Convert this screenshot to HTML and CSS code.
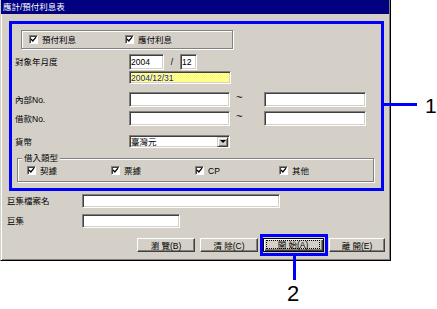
FILE: index.html
```html
<!DOCTYPE html>
<html lang="zh-Hant">
<head>
<meta charset="utf-8">
<title>應計/預付利息表</title>
<link rel="stylesheet" href="styles.css">
</head>
<body>
<div class="window">
  <div class="titlebar">應計/預付利息表</div>
  <div class="content">
    <div class="topgroup">
      <label class="chk chk-top"><span class="cb"><svg viewBox="0 0 7 7" width="7" height="7"><polyline points="1,3 2.8,5 6,1.2" fill="none" stroke="#000" stroke-width="1.3"/></svg></span>預付利息</label>
      <label class="chk chk-top"><span class="cb"><svg viewBox="0 0 7 7" width="7" height="7"><polyline points="1,3 2.8,5 6,1.2" fill="none" stroke="#000" stroke-width="1.3"/></svg></span>應付利息</label>
    </div>

    <div class="row r-date">
      <span class="lbl">對象年月度</span>
      <span class="field f-year">2004</span>
      <span class="slash">/</span>
      <span class="field f-month">12</span>
    </div>
    <div class="row r-yellow">
      <span class="field yellow">2004/12/31</span>
    </div>

    <div class="row r-range1">
      <span class="lbl">內部No.</span>
      <span class="field f-wide"></span>
      <span class="tilde">~</span>
      <span class="field f-wide2"></span>
    </div>
    <div class="row r-range2">
      <span class="lbl">借款No.</span>
      <span class="field f-wide"></span>
      <span class="tilde">~</span>
      <span class="field f-wide2"></span>
    </div>

    <div class="row r-cur">
      <span class="lbl">貨幣</span>
      <span class="field select"><span class="sel-text">臺灣元</span><span class="drop"><span class="tri"></span></span></span>
    </div>

    <div class="group2">
      <span class="legend">借入類型</span>
      <label class="chk chk-bottom"><span class="cb"><svg viewBox="0 0 7 7" width="7" height="7"><polyline points="1,3 2.8,5 6,1.2" fill="none" stroke="#000" stroke-width="1.3"/></svg></span>契據</label>
      <label class="chk chk-bottom"><span class="cb"><svg viewBox="0 0 7 7" width="7" height="7"><polyline points="1,3 2.8,5 6,1.2" fill="none" stroke="#000" stroke-width="1.3"/></svg></span>票據</label>
      <label class="chk chk-bottom"><span class="cb"><svg viewBox="0 0 7 7" width="7" height="7"><polyline points="1,3 2.8,5 6,1.2" fill="none" stroke="#000" stroke-width="1.3"/></svg></span>CP</label>
      <label class="chk chk-bottom"><span class="cb"><svg viewBox="0 0 7 7" width="7" height="7"><polyline points="1,3 2.8,5 6,1.2" fill="none" stroke="#000" stroke-width="1.3"/></svg></span>其他</label>
    </div>

    <div class="row2 r-macro1">
      <span class="lbl2">巨集檔案名</span>
      <span class="field f-macro"></span>
    </div>
    <div class="row2 r-macro2">
      <span class="lbl2">巨集</span>
      <span class="field f-macro2"></span>
    </div>

    <div class="buttons">
      <span class="btn">瀏 覽(B)</span>
      <span class="btn">清 除(C)</span>
      <span class="btn btn-default"><span class="focus">開 始(A)</span></span>
      <span class="btn btn-last">離 開(E)</span>
    </div>
  </div>
</div>

<div class="callout-box box1"></div>
<div class="callout-line line1"></div>
<div class="callout-num num1">1</div>

<div class="callout-box box2"></div>
<div class="callout-line line2"></div>
<div class="callout-num num2">2</div>
</body>
</html>
```

FILE: styles.css
```css
* { box-sizing: border-box; }

html, body {
  margin: 0;
  padding: 0;
}

body {
  width: 437px;
  height: 309px;
  background: #fff;
  position: relative;
  overflow: hidden;
  font-family: "Liberation Sans", "Noto Sans CJK TC", sans-serif;
  font-size: 8.5px;
  line-height: 10px;
  color: #000;
}

.window {
  width: 391px;
  height: 261px;
  background: #d4d0c8;
  border-left: 1px solid #d4d0c8;
  border-right: 1px solid #000;
  border-bottom: 1px solid #000;
  box-shadow: inset 1px 0 #fff, inset -1px -1px #808080;
}

.titlebar {
  height: 14px;
  margin-right: 1px;
  background: #000080;
  color: #fff;
  padding-left: 2px;
  line-height: 14px;
}

/* top checkbox group */
.topgroup {
  margin: 16px 0 0 20px;
  width: 212px;
  height: 19px;
  border: 1px solid #808080;
  box-shadow: inset 1px 1px #fff, 1px 1px #fff;
  display: flex;
  align-items: center;
  padding-left: 7px;
}

.chk {
  display: flex;
  align-items: center;
}

.chk-top { width: 96px; }
.chk-bottom { width: 84px; }

.cb {
  width: 9px;
  height: 9px;
  margin-right: 4px;
  background: #fff;
  border: 1px solid;
  border-color: #808080 #fff #fff #808080;
  box-shadow: inset 1px 1px #404040;
  display: flex;
}

.cb svg { display: block; }

/* form rows */
.row {
  display: flex;
  align-items: center;
  margin-left: 14px;
}

.lbl { width: 114px; }

.field {
  background: #fff;
  border: 1px solid;
  border-color: #808080 #fff #fff #808080;
  box-shadow: inset 1px 1px #404040, inset -1px -1px #d4d0c8;
  padding-left: 1px;
  display: flex;
  align-items: center;
}

.r-date { margin-top: 5px; height: 16px; }
.f-year { width: 35px; height: 16px; }
.slash { width: 16px; text-align: center; }
.f-month { width: 17px; height: 16px; }

.r-yellow { margin-top: 1px; margin-left: 128px; height: 13px; }
.yellow {
  width: 102px;
  height: 13px;
  background: repeating-conic-gradient(#ffff40 0 25%, #ffffd0 0 50%) 0 0 / 2px 2px;
  color: #1a1aa8;
}

.r-range1 { margin-top: 8px; height: 15px; }
.r-range2 { margin-top: 4px; height: 15px; }
.f-wide { width: 101px; height: 15px; }
.f-wide2 { width: 102px; height: 15px; }
.tilde {
  width: 34px;
  padding-left: 6px;
  font-size: 11px;
  align-self: flex-start;
  line-height: 11px;
}

.r-cur { margin-top: 9px; height: 13px; }
.select {
  width: 101px;
  height: 13px;
  justify-content: space-between;
  padding-right: 1px;
}
.drop {
  width: 11px;
  height: 10px;
  background: #d4d0c8;
  border: 1px solid;
  border-color: #d4d0c8 #404040 #404040 #d4d0c8;
  box-shadow: inset 1px 1px #fff, inset -1px -1px #808080;
  display: flex;
  align-items: center;
  justify-content: center;
}
.tri {
  width: 0;
  height: 0;
  border-left: 3px solid transparent;
  border-right: 3px solid transparent;
  border-top: 3px solid #000;
}

/* bottom group box */
.group2 {
  position: relative;
  margin: 10px 0 0 16px;
  width: 357px;
  height: 24px;
  border: 1px solid #808080;
  box-shadow: inset 1px 1px #fff, 1px 1px #fff;
  display: flex;
  align-items: center;
  padding-left: 9px;
  padding-top: 1px;
}
.legend {
  position: absolute;
  top: -6px;
  left: 4px;
  padding: 0 2px;
  background: #d4d0c8;
}

/* macro rows */
.row2 {
  display: flex;
  align-items: center;
  margin-left: 6px;
}
.lbl2 { width: 75px; }
.r-macro1 { margin-top: 12px; height: 14px; }
.r-macro2 { margin-top: 6px; height: 14px; }
.f-macro { width: 198px; height: 14px; }
.f-macro2 { width: 98px; height: 14px; }

/* buttons */
.buttons {
  display: flex;
  gap: 5px;
  margin: 10px 0 0 136px;
  height: 14px;
}
.btn {
  width: 58px;
  height: 14px;
  background: #d4d0c8;
  border: 1px solid;
  border-color: #fff #404040 #404040 #fff;
  box-shadow: inset -1px -1px #808080;
  display: flex;
  align-items: center;
  justify-content: center;
  padding-top: 1px;
}
.btn-default {
  width: 61px;
  border: 1px solid #000;
  box-shadow: inset 1px 1px #fff, inset -1px -1px #404040, inset -2px -2px #808080;
  padding: 1px 3px 2px 2px;
}
.focus {
  flex: 1;
  align-self: stretch;
  border: 1px dotted #000;
  display: flex;
  align-items: center;
  justify-content: center;
  line-height: 8px;
}
.btn-last { width: 56px; }

/* callouts */
.callout-box {
  position: absolute;
  border: 3px solid #0000ff;
}
.callout-line {
  position: absolute;
  background: #0000ff;
}
.callout-num {
  position: absolute;
  font-family: "Liberation Sans", sans-serif;
  line-height: 1;
  color: #000;
}

.box1 { left: 9px; top: 21px; width: 375px; height: 170px; }
.line1 { left: 384px; top: 103px; width: 33px; height: 3px; }
.num1 { left: 425px; top: 95px; font-size: 21px; }

.box2 { left: 260px; top: 234px; width: 68px; height: 22px; }
.line2 { left: 293px; top: 256px; width: 3px; height: 24px; }
.num2 { left: 287px; top: 283px; font-size: 22px; }
```
